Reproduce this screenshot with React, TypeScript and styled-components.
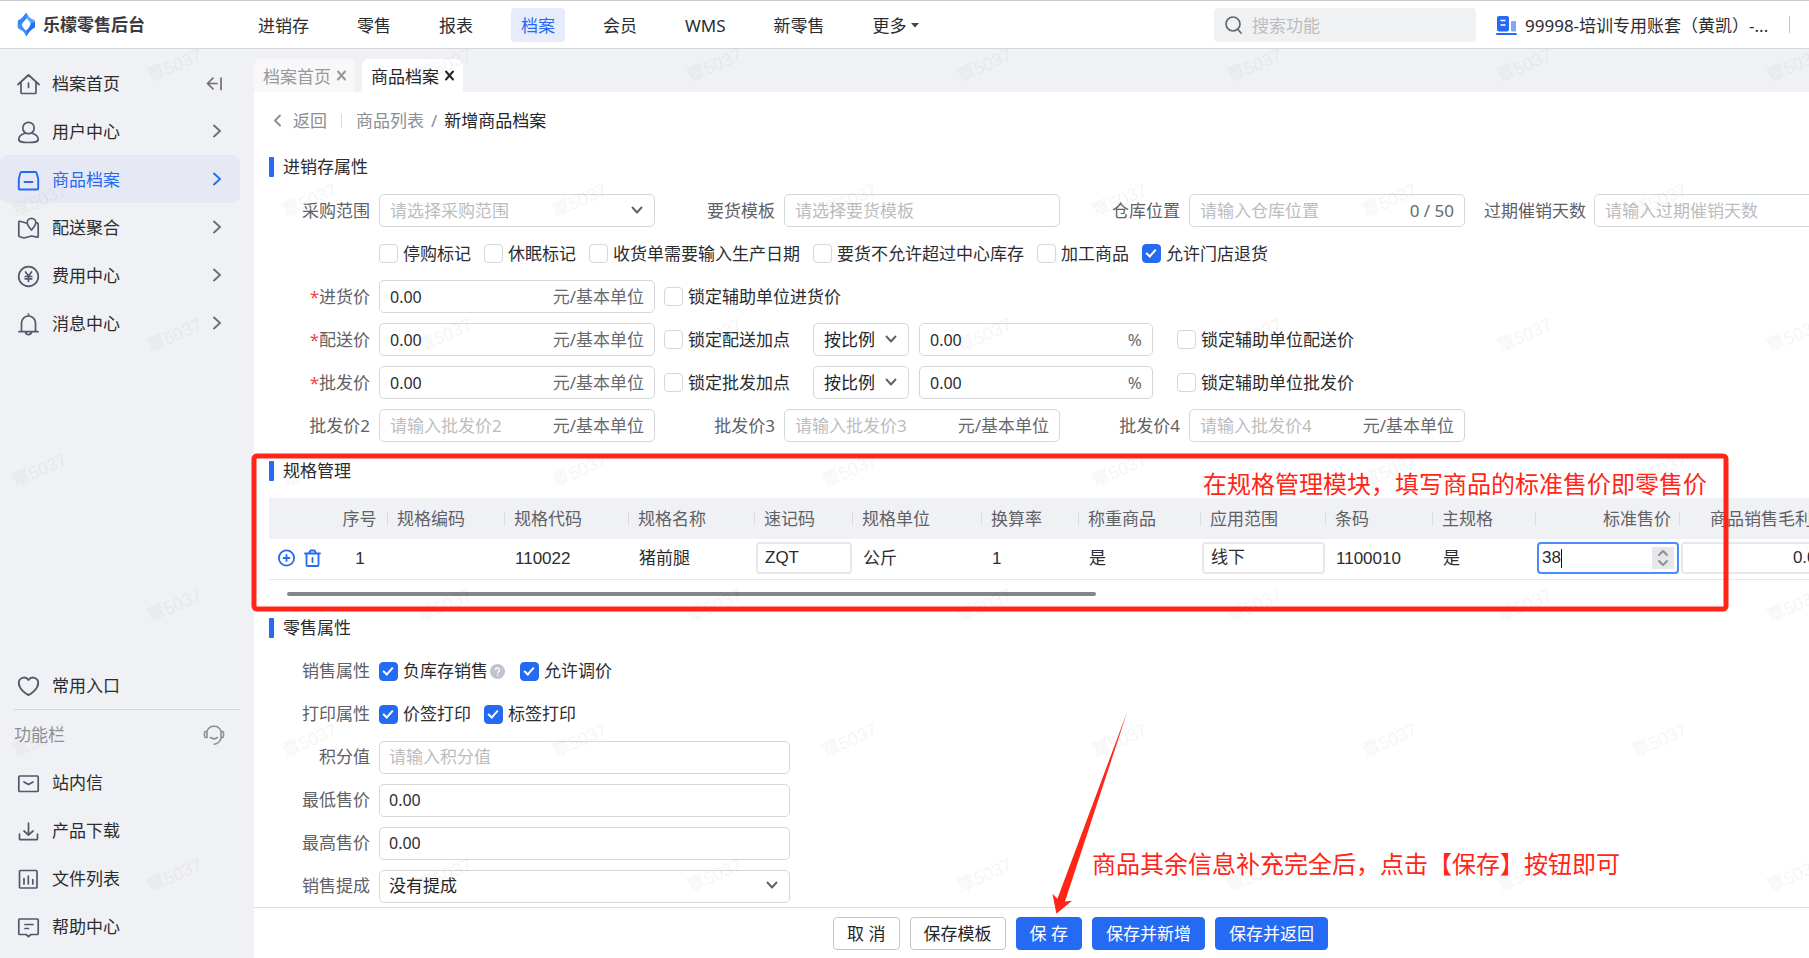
import React from 'react';
import styled, { createGlobalStyle } from 'styled-components';

const BLUE = '#256af3';
const RED = '#ff2617';
const CJK = '"Noto Sans CJK SC"';

const GlobalStyle = createGlobalStyle`
  *, *::before, *::after { box-sizing: border-box; }
  body {
    margin: 0;
    background: #fff;
    color: #2b2c2f;
    font: 17px/24px "Noto Sans", ${CJK}, sans-serif;
    overflow: hidden;
  }
  button, input, select { font: inherit; color: inherit; margin: 0; }
  a { color: inherit; text-decoration: none; }
`;

/* ---------- shell ---------- */

const Page = styled.div`
  position: relative;
  display: flex;
  flex-direction: column;
  height: 100vh;
  overflow: hidden;
`;

const Body = styled.div`
  position: relative;
  display: flex;
  flex: 1;
  min-height: 0;
`;

const Header = styled.header`
  display: flex;
  align-items: center;
  flex: none;
  height: 49px;
  border-top: 1px solid #c9cacc;
  border-bottom: 1px solid #d4d6d9;
  padding: 0 19px 0 17px;
  white-space: nowrap;
`;

const Brand = styled.a`
  display: flex;
  align-items: center;
  gap: 7px;
  width: 231px;
  font-weight: 700;
  color: #3a3b40;
`;

const Nav = styled.nav`
  display: flex;
  gap: 28px;
`;

const NavLink = styled.a<{ $active?: boolean }>`
  display: flex;
  align-items: center;
  gap: 4px;
  height: 34px;
  padding: 2px 10px 0;
  border-radius: 4px;
  color: ${(p) => (p.$active ? BLUE : '#2b2c2f')};
  background: ${(p) => (p.$active ? '#e6ecfc' : 'transparent')};
`;

const SearchBox = styled.label`
  display: flex;
  align-items: center;
  gap: 9px;
  width: 262px;
  height: 34px;
  margin-left: auto;
  padding: 0 10px;
  border-radius: 4px;
  background: #f0f1f3;
  color: #66676b;

  input {
    flex: 1;
    min-width: 0;
    border: 0;
    padding: 2px 0 0;
    outline: 0;
    background: transparent;
  }
  input::placeholder { color: #bcbdc0; }
`;

const Account = styled.button`
  display: flex;
  align-items: center;
  gap: 7px;
  width: 295px;
  margin-left: 19px;
  padding: 2px 0 0;
  border: 0;
  border-right: 1px solid #c4c5c8;
  background: none;
  height: 17px;
`;

/* ---------- sidebar ---------- */

const Sidebar = styled.aside`
  display: flex;
  flex-direction: column;
  flex: none;
  width: 254px;
  padding: 10px 14px 8px 0;
  background: #f0f1f4;
`;

const SideItem = styled.a<{ $active?: boolean }>`
  display: flex;
  align-items: center;
  gap: 12px;
  flex: none;
  height: 48px;
  padding: 2px 18px 0 17px;
  border-radius: 8px;
  color: ${(p) => (p.$active ? BLUE : '#2b2c2f')};
  background: ${(p) => (p.$active ? '#e6e9f3' : 'transparent')};

  > svg:first-child { color: ${(p) => (p.$active ? BLUE : '#55576a')}; }
  > svg:last-child { margin-left: auto; color: ${(p) => (p.$active ? BLUE : '#6d6e76')}; }
`;

const SideSpacer = styled.div`
  flex: 1;
`;

const SideCaption = styled.div`
  display: flex;
  align-items: center;
  justify-content: space-between;
  height: 49px;
  margin-left: 14px;
  padding: 2px 15px 0 0;
  border-top: 1px solid #d3d4d8;
  color: #8f9095;
`;

/* ---------- main ---------- */

const Main = styled.main`
  display: flex;
  flex-direction: column;
  flex: 1;
  min-width: 0;
`;

const Tabs = styled.div`
  display: flex;
  align-items: flex-end;
  gap: 7px;
  flex: none;
  height: 43px;
  background: #f0f1f4;
`;

const Tab = styled.button<{ $active?: boolean }>`
  display: flex;
  align-items: center;
  gap: 5px;
  height: 33px;
  width: 101px;
  padding: 2px 0 0 9px;
  border: 0;
  border-radius: 6px 6px 0 0;
  white-space: nowrap;
  background: ${(p) => (p.$active ? '#fff' : '#f8f8f9')};
  color: ${(p) => (p.$active ? '#242529' : '#97989c')};

  svg { margin-bottom: 3px; }
`;

const Content = styled.div`
  flex: 1;
  min-height: 0;
  overflow: hidden;
  padding: 17px 0 0 15px;
  white-space: nowrap;
`;

const Breadcrumb = styled.nav`
  display: flex;
  align-items: center;
  height: 24px;
  padding-left: 4px;
  color: #8d8e92;

  strong { font-weight: 400; color: #242529; }
`;

const BackLink = styled.a`
  display: flex;
  align-items: center;
  gap: 11px;
`;

const CrumbRule = styled.span`
  width: 1px;
  height: 14px;
  margin: 0 14px;
  background: #dcdde0;
`;

const Slash = styled.span`
  padding: 0 7px;
`;

const Section = styled.section<{ $top: number }>`
  margin-top: ${(p) => p.$top}px;
`;

const SectionTitle = styled.h2`
  display: flex;
  align-items: center;
  gap: 9px;
  height: 20px;
  margin: 0 0 17px;
  font-size: 17px;
  font-weight: 400;

  &::before {
    content: '';
    width: 5px;
    height: 20px;
    border-radius: 1px;
    background: ${BLUE};
  }
`;

const Rows = styled.div`
  display: flex;
  flex-direction: column;
  gap: 10px;
`;

const Row = styled.div`
  display: flex;
  align-items: center;
  height: 33px;
`;

const FieldRow = styled(Row)`
  gap: 19px;
`;

const Field = styled.div`
  display: flex;
  align-items: center;
  gap: 9px;
  flex: none;
`;

const FieldLabel = styled.label`
  flex: none;
  width: 101px;
  text-align: right;
  color: #606166;
`;

const Required = styled.span`
  color: #f04848;
`;

const Box = styled.div<{ $width: number; $pad?: number }>`
  display: flex;
  align-items: center;
  flex: none;
  width: ${(p) => p.$width}px;
  height: 33px;
  padding: 0 10px 0 ${(p) => p.$pad ?? 10}px;
  border: 1px solid #d6d7d9;
  border-radius: 5px;
  background: #fff;

  input {
    flex: 1;
    width: 0;
    min-width: 0;
    padding: 0;
    border: 0;
    outline: 0;
    background: none;
    font-size: 16px;
  }
  input::placeholder { color: #bcbdc0; font-size: 17px; }
`;

const Unit = styled.span`
  flex: none;
  color: #68696d;
`;

const SelectBox = styled(Box)<{ $muted?: boolean }>`
  color: #606166;

  select {
    flex: 1;
    width: 0;
    min-width: 0;
    padding: 0;
    border: 0;
    outline: 0;
    appearance: none;
    background: none;
    color: ${(p) => (p.$muted ? '#bcbdc0' : '#242529')};
  }
`;

const Check = styled.label`
  display: flex;
  align-items: center;
  gap: 5px;
  flex: none;

  input {
    position: relative;
    flex: none;
    appearance: none;
    width: 19px;
    height: 19px;
    border: 1px solid #d6d7d9;
    border-radius: 4px;
    background: #fff;
  }
  input:checked {
    border-color: ${BLUE};
    background: ${BLUE};
  }
  input:checked::after {
    content: '';
    position: absolute;
    left: 5px;
    top: 2px;
    width: 6px;
    height: 10px;
    border: solid #fff;
    border-width: 0 2px 2px 0;
    transform: rotate(42deg);
  }
  svg { margin: 0 2px 0 -3px; }
`;

const CheckGroup = styled.div`
  display: flex;
  gap: 13px;
`;

const PriceOptions = styled.div`
  display: flex;
  align-items: center;
  gap: 10px;
  margin-left: 9px;

  > label:first-child { margin-right: 13px; }
  > label:last-child:not(:first-child) { margin-left: 14px; }
`;

/* ---------- spec table ---------- */

const TableFrame = styled.div`
  overflow: hidden;
`;

const SpecTable = styled.table`
  width: 1569px;
  table-layout: fixed;
  border-collapse: collapse;
  font-family: "Liberation Sans", ${CJK}, sans-serif;
`;

const Th = styled.th<{ $align?: 'right' | 'center'; $plain?: boolean }>`
  height: 41px;
  padding: 2px 9px 0;
  background: linear-gradient(#dcdde0, #dcdde0) right center / 1px 14px no-repeat #f0f1f4;
  ${(p) => p.$plain && 'background: #f0f1f4;'}
  font-weight: 400;
  text-align: ${(p) => p.$align ?? 'left'};
  color: #606166;
`;

const Td = styled.td<{ $align?: 'center'; $tight?: boolean }>`
  height: 40px;
  padding: ${(p) => (p.$tight ? '0 1px 1px' : '0 9px 0 10px')};
  border-bottom: 1px solid #e8e8ea;
  text-align: ${(p) => p.$align ?? 'left'};
`;

const CellBox = styled.div<{ $focus?: boolean }>`
  position: relative;
  display: flex;
  align-items: center;
  height: 32px;
  padding: 0 ${(p) => (p.$focus ? '3px' : '9px')} 0 ${(p) => (p.$focus ? '3px' : '7px')};
  border: 2px solid ${(p) => (p.$focus ? '#4b8bfd' : '#e8e8ea')};
  border-radius: 4px;
  background: #fff;

  input {
    flex: 1;
    width: 0;
    min-width: 0;
    padding: 0;
    border: 0;
    outline: 0;
    background: none;
  }
  input[data-align='right'] { text-align: right; }
`;

const Caret = styled.span`
  position: absolute;
  left: 22px;
  top: 5px;
  width: 1px;
  height: 19px;
  background: #111;
`;

const Stepper = styled.button`
  display: grid;
  place-items: center;
  width: 22px;
  height: 22px;
  padding: 0;
  border: 0;
  background: #e7e6eb;
`;

const RowActions = styled.div`
  display: flex;
  align-items: center;
  gap: 9px;
  margin-left: -1px;
  padding-bottom: 2px;
`;

const IconButton = styled.button`
  display: flex;
  padding: 0;
  border: 0;
  background: none;
  color: ${BLUE};
`;

const ScrollThumb = styled.div`
  width: 54%;
  max-width: 809px;
  height: 4px;
  margin: 12px 0 0 18px;
  border-radius: 2px;
  background: #858585;
`;

/* ---------- footer ---------- */

const Footer = styled.footer`
  display: flex;
  justify-content: center;
  align-items: center;
  gap: 10px;
  flex: none;
  height: 51px;
  padding: 1px 0 0 98px;
  border-top: 1px solid #dcdde0;
`;

const Button = styled.button<{ $primary?: boolean }>`
  height: 33px;
  padding: 1px 13px 0;
  border: 1px solid ${(p) => (p.$primary ? BLUE : '#c4c5c8')};
  border-radius: 4px;
  background: ${(p) => (p.$primary ? BLUE : '#fff')};
  color: ${(p) => (p.$primary ? '#fff' : '#242529')};
  line-height: 24px;
`;

/* ---------- overlays ---------- */

const Overlay = styled.svg`
  position: absolute;
  inset: 0;
  width: 100%;
  height: 100%;
  pointer-events: none;
`;

const Note = styled.p<{ $x: number; $y: number }>`
  position: absolute;
  left: ${(p) => p.$x}px;
  top: ${(p) => p.$y}px;
  margin: 0;
  font: 24px/32px ${CJK}, sans-serif;
  color: ${RED};
  white-space: nowrap;
`;

/* ---------- icons ---------- */

const Line: React.FC<{ w?: number; h?: number; sw?: number; children: React.ReactNode }> = ({
  w = 23,
  h = 24,
  sw = 1.7,
  children,
}) => (
  <svg width={w} height={h} viewBox={`0 0 ${w} ${h}`} fill="none" stroke="currentColor" strokeWidth={sw} strokeLinecap="round" strokeLinejoin="round" aria-hidden="true">
    {children}
  </svg>
);

const ChevronRight = () => (
  <Line w={10} h={16} sw={1.9}><path d="M2 1.500l6 5.500-6 5.500" /></Line>
);
const ChevronDown = () => (
  <Line w={14} h={12} sw={1.9}><path d="M2.500 2.500L7 7.500l4.500-5" /></Line>
);
const Close = () => (
  <Line w={11} h={11} sw={2}><path d="M2 1.500l7 8M9 1.500l-7 8" /></Line>
);

const icons = {
  home: <Line><path d="M1 12.500L11.500 3 22 12.500M4 10.500V20.500q0 1 1 1h13q1 0 1-1V10.500M11.500 11v4.500" /></Line>,
  user: <Line><circle cx="11.500" cy="8" r="5.700" /><path d="M7.800 13.200C4 14.500 1.800 16.800 1.800 19.200c0 2.800 3 3.300 9.700 3.300s9.700-.5 9.700-3.300c0-2.400-2.200-4.700-6-6" /></Line>,
  goods: <Line sw={1.9}><path d="M4.800 4h13.400q1.300 0 1.600 1.500L21.200 11v9.500q0 1-1 1H2.800q-1 0-1-1V11L3.200 5.500Q3.500 4 4.800 4zM7.500 14h8" /></Line>,
  map: <Line><path d="M9 7L3 5.300Q1.800 5 1.800 6.300V19.500q0 1 1 1.300L7 22l7.500-2 5.500 1.200q1.200.2 1.200-1V8q0-1.200-1.700-1.500M14.500 14C12 11 10.200 9 10.200 6.700a4.300 4.300 0 0 1 8.600 0C18.800 9 17 11 14.500 14z" /></Line>,
  yen: <Line><circle cx="11.500" cy="12.500" r="9.800" /><path d="M8.500 8l3 4 3-4M8.200 12.500h6.600M8.200 14.800h6.600M11.500 12v5.500" /></Line>,
  bell: <Line><path d="M4.500 19.500V11a7 7 0 0 1 14 0v8.500M2 19.700h19M11.500 2v2M8.500 20.200c.8 3.200 5.200 3.200 6 0" /></Line>,
  heart: <Line sw={1.9}><path d="M11.500 21C9 20 1.800 15 1.800 9a5.300 5.300 0 0 1 9.700-3A5.300 5.300 0 0 1 21.200 9c0 6-7.200 11-9.700 12z" /></Line>,
  mail: <Line><rect x="1.800" y="5" width="19.400" height="15.500" rx="1" /><path d="M7 11l4.500 2.500L16 11" /></Line>,
  download: <Line><path d="M11.500 4v11.500M7 12l4.500 4 4.500-4M2.500 15v4.700q0 1 1 1h16q1 0 1-1V15" /></Line>,
  chart: <Line><rect x="2.500" y="3.500" width="17.500" height="17.500" rx="1" /><path d="M7 11.500V17M11.300 9v8M15.800 12.500V17" /></Line>,
  help: <Line><path d="M2.500 4h18q.7 0 .7.7v14.100q0 .7-.7.7H14l-2.500 2L9 19.500H2.500q-.7 0-.7-.7V4.700q0-.7.7-.7zM8 9.500h8M8 13.500h3.500" /></Line>,
  collapse: <Line w={16} h={16}><path d="M1.500 7.500H11M7 2L1.500 7.500 7 13M15 2v11.500" /></Line>,
  headset: <Line w={22} h={22} sw={1.6}><path d="M4 7.500a7.300 7.300 0 0 1 14 0M18.300 13c-.5 4-3 6.500-7 7.300M7.500 13.500c2 1.500 5 1.500 7 0M4 7.500H2.500Q1.500 7.500 1.500 9v3q0 1.500 1 1.500H4zM18 7.500h1.500q1 0 1 1.500v3q0 1.500-1 1.500H18z" /></Line>,
};

const Logo = () => (
  <svg width="19" height="25" viewBox="0 0 19 25" aria-hidden="true">
    <path fill="#2f86f5" d="M9 .5l2.200 4.200C9 7 6.500 9.500 4.500 12.500L5 17 .8 14V8.500C4 7.500 7 4 9 .5z" />
    <path fill="#58a4fa" d="M10 1.500l2.500 4 5.500 3V13l-4-.5C13 9.500 11 7.500 9 6z" />
    <path fill="#2470ee" d="M18 10v5.500c-3.500 1.500-6.500 5-8.500 9L7.500 20c3.500-2.500 5.500-5.500 6.500-9z" />
    <path fill="#3c90f7" d="M.8 11v5l5.500 3.500 3 4.500 1-4.500C7.500 17.500 5.500 15 4.500 12z" />
  </svg>
);

const Building = () => (
  <svg width="23" height="20" viewBox="0 0 23 20" aria-hidden="true">
    <rect x="2" y="0" width="12" height="15.500" rx="2" fill={BLUE} />
    <path d="M5.500 4.500h5M5.500 9h5" stroke="#fff" strokeWidth="1.500" />
    <rect x="16" y="5" width="5" height="10.500" rx="1" fill="#7ea8f8" />
    <rect x="1" y="17" width="21" height="2" rx="1" fill={BLUE} />
  </svg>
);

const Question = () => (
  <svg width="15" height="15" viewBox="0 0 15 15" aria-hidden="true">
    <circle cx="7.500" cy="7.500" r="7.500" fill="#bfc3cd" />
    <path d="M5.500 6a2 2 0 1 1 2.800 1.800q-.8.400-.8 1.400M7.500 10.600v1.200" fill="none" stroke="#fff" strokeWidth="1.300" />
  </svg>
);

/* ---------- data ---------- */

const topNav = ['进销存', '零售', '报表', '档案', '会员', 'WMS', '新零售'];

const sideTop: [keyof typeof icons, string][] = [
  ['user', '用户中心'],
  ['goods', '商品档案'],
  ['map', '配送聚合'],
  ['yen', '费用中心'],
  ['bell', '消息中心'],
];

const sideTools: [keyof typeof icons, string][] = [
  ['mail', '站内信'],
  ['download', '产品下载'],
  ['chart', '文件列表'],
  ['help', '帮助中心'],
];

const flags = ['停购标记', '休眠标记', '收货单需要输入生产日期', '要货不允许超过中心库存', '加工商品', '允许门店退货'];

const columns: { name: string; width: number; align?: 'right' | 'center'; plain?: boolean }[] = [
  { name: '', width: 62, plain: true },
  { name: '序号', width: 57, align: 'center' },
  { name: '规格编码', width: 117 },
  { name: '规格代码', width: 124 },
  { name: '规格名称', width: 126 },
  { name: '速记码', width: 98 },
  { name: '规格单位', width: 129 },
  { name: '换算率', width: 97 },
  { name: '称重商品', width: 122 },
  { name: '应用范围', width: 125 },
  { name: '条码', width: 107 },
  { name: '主规格', width: 103 },
  { name: '标准售价', width: 144, align: 'right' },
  { name: '商品销售毛利率', width: 158, align: 'right' },
];

/* ---------- form parts ---------- */

const TextField: React.FC<{
  id: string;
  label: string;
  width?: number;
  pad?: number;
  required?: boolean;
  value?: string;
  placeholder?: string;
  unit?: string;
}> = ({ id, label, width = 276, pad, required, value, placeholder, unit }) => (
  <Field>
    <FieldLabel htmlFor={id}>
      {required && <Required>*</Required>}
      {label}
    </FieldLabel>
    <Box $width={width} $pad={pad}>
      <input id={id} defaultValue={value} placeholder={placeholder} />
      {unit && <Unit>{unit}</Unit>}
    </Box>
  </Field>
);

const CheckBox: React.FC<{ label: string; checked?: boolean; children?: React.ReactNode }> = ({ label, checked, children }) => (
  <Check>
    <input type="checkbox" defaultChecked={checked} />
    <span>{label}</span>
    {children}
  </Check>
);

const PriceRow: React.FC<{ id: string; label: string; markup: string; lock: string }> = ({ id, label, markup, lock }) => (
  <Row>
    <TextField id={id} label={label} required value="0.00" unit="元/基本单位" />
    <PriceOptions>
      <CheckBox label={markup} />
      <SelectBox $width={96}>
        <select aria-label={`${label}加点方式`} defaultValue="按比例">
          <option>按比例</option>
        </select>
        <ChevronDown />
      </SelectBox>
      <Box $width={234}>
        <input aria-label={`${label}加点`} defaultValue="0.00" />
        <Unit>%</Unit>
      </Box>
      <CheckBox label={lock} />
    </PriceOptions>
  </Row>
);

const Watermark = () => (
  <Overlay aria-hidden="true">
    <defs>
      <pattern id="mark" width="270" height="270" patternUnits="userSpaceOnUse">
        <g fill="#000" fillOpacity="0.04" fontSize="18" fontFamily={`"Liberation Sans", ${CJK}, sans-serif`} textAnchor="middle">
          <text transform="translate(42 157) rotate(-24)">覃5037</text>
          <text transform="translate(177 22) rotate(-24)">覃5037</text>
          <text transform="translate(177 292) rotate(-24)">覃5037</text>
        </g>
      </pattern>
    </defs>
    <rect width="100%" height="100%" fill="url(#mark)" />
  </Overlay>
);

export default function App() {
  return (
    <Page>
      <GlobalStyle />
      <Header>
        <Brand href="#">
          <Logo />
          乐檬零售后台
        </Brand>
        <Nav>
          {topNav.map((name) => (
            <NavLink key={name} href="#" $active={name === '档案'}>{name}</NavLink>
          ))}
          <NavLink href="#">
            更多
            <svg width="8" height="5" viewBox="0 0 8 5" aria-hidden="true"><path d="M0 0h8L4 4.500z" fill="#444" /></svg>
          </NavLink>
        </Nav>
        <SearchBox>
          <Line w={19} h={20} sw={1.7}><circle cx="9" cy="9" r="7" /><path d="M14 14.500l3 3.500" /></Line>
          <input placeholder="搜索功能" aria-label="搜索功能" />
        </SearchBox>
        <Account>
          <Building />
          99998-培训专用账套（黄凯）-...
        </Account>
      </Header>

      <Body>
        <Sidebar>
          <SideItem href="#">
            {icons.home}
            档案首页
            {icons.collapse}
          </SideItem>
          {sideTop.map(([icon, name]) => (
            <SideItem key={name} href="#" $active={name === '商品档案'}>
              {icons[icon]}
              {name}
              <ChevronRight />
            </SideItem>
          ))}
          <SideSpacer />
          <SideItem href="#">
            {icons.heart}
            <span>常用入口</span>
          </SideItem>
          <SideCaption>
            功能栏
            {icons.headset}
          </SideCaption>
          {sideTools.map(([icon, name]) => (
            <SideItem key={name} href="#">
              {icons[icon]}
              <span>{name}</span>
            </SideItem>
          ))}
        </Sidebar>

        <Main>
          <Tabs>
            <Tab>档案首页<Close /></Tab>
            <Tab $active>商品档案<Close /></Tab>
          </Tabs>

          <Content>
            <Breadcrumb>
              <BackLink href="#">
                <Line w={9} h={14} sw={1.9}><path d="M7 1.500L2 6.500l5 5" /></Line>
                返回
              </BackLink>
              <CrumbRule />
              <a href="#">商品列表</a>
              <Slash>/</Slash>
              <strong>新增商品档案</strong>
            </Breadcrumb>

            <Section $top={24}>
              <SectionTitle>进销存属性</SectionTitle>
              <Rows>
                <FieldRow>
                  <Field>
                    <FieldLabel htmlFor="scope">采购范围</FieldLabel>
                    <SelectBox $width={276} $muted>
                      <select id="scope" defaultValue="请选择采购范围">
                        <option>请选择采购范围</option>
                      </select>
                      <ChevronDown />
                    </SelectBox>
                  </Field>
                  <TextField id="template" label="要货模板" placeholder="请选择要货模板" />
                  <TextField id="location" label="仓库位置" placeholder="请输入仓库位置" unit="0 / 50" />
                  <TextField id="expiry" label="过期催销天数" placeholder="请输入过期催销天数" />
                </FieldRow>
                <Row>
                  <Field>
                    <FieldLabel as="span" />
                    <CheckGroup>
                      {flags.map((name) => (
                        <CheckBox key={name} label={name} checked={name === '允许门店退货'} />
                      ))}
                    </CheckGroup>
                  </Field>
                </Row>
                <Row>
                  <TextField id="purchase" label="进货价" required value="0.00" unit="元/基本单位" />
                  <PriceOptions>
                    <CheckBox label="锁定辅助单位进货价" />
                  </PriceOptions>
                </Row>
                <PriceRow id="delivery" label="配送价" markup="锁定配送加点" lock="锁定辅助单位配送价" />
                <PriceRow id="wholesale" label="批发价" markup="锁定批发加点" lock="锁定辅助单位批发价" />
                <FieldRow>
                  {[2, 3, 4].map((n) => (
                    <TextField key={n} id={`wholesale${n}`} label={`批发价${n}`} placeholder={`请输入批发价${n}`} unit="元/基本单位" />
                  ))}
                </FieldRow>
              </Rows>
            </Section>

            <Section $top={19}>
              <SectionTitle>规格管理</SectionTitle>
              <TableFrame>
                <SpecTable>
                  <colgroup>
                    {columns.map((c) => <col key={c.name} style={{ width: c.width }} />)}
                  </colgroup>
                  <thead>
                    <tr>
                      {columns.map((c) => (
                        <Th key={c.name} $align={c.align} $plain={c.plain}>{c.name}</Th>
                      ))}
                    </tr>
                  </thead>
                  <tbody>
                    <tr>
                      <Td>
                        <RowActions>
                          <IconButton aria-label="新增规格">
                            <Line w={17} h={18} sw={1.8}><circle cx="8.500" cy="9" r="7.600" /><path d="M5.500 9h6M8.500 6v6" /></Line>
                          </IconButton>
                          <IconButton aria-label="删除规格">
                            <Line w={17} h={18} sw={1.8}><path d="M1 4.500h15M2.500 4.500V16q0 1 1 1h10q1 0 1-1V4.500M5 4l1.500-2.500h4L12 4M8.500 9v4" /></Line>
                          </IconButton>
                        </RowActions>
                      </Td>
                      <Td $align="center">1</Td>
                      <Td />
                      <Td>110022</Td>
                      <Td>猪前腿</Td>
                      <Td $tight><CellBox><input aria-label="速记码" defaultValue="ZQT" /></CellBox></Td>
                      <Td>公斤</Td>
                      <Td>1</Td>
                      <Td>是</Td>
                      <Td $tight><CellBox><input aria-label="应用范围" defaultValue="线下" /></CellBox></Td>
                      <Td>1100010</Td>
                      <Td>是</Td>
                      <Td $tight>
                        <CellBox $focus>
                          <input aria-label="标准售价" defaultValue="38" />
                          <Caret />
                          <Stepper aria-label="调整售价">
                            <Line w={12} h={18} sw={1.8}><path d="M2 6l4-4 4 4M2 12l4 4 4-4" stroke="#8b8b96" /></Line>
                          </Stepper>
                        </CellBox>
                      </Td>
                      <Td $tight><CellBox><input aria-label="商品销售毛利率" data-align="right" defaultValue="0.00" /></CellBox></Td>
                    </tr>
                  </tbody>
                </SpecTable>
              </TableFrame>
              <ScrollThumb />
            </Section>

            <Section $top={22}>
              <SectionTitle>零售属性</SectionTitle>
              <Rows>
                <Row>
                  <Field>
                    <FieldLabel as="span">销售属性</FieldLabel>
                    <CheckGroup>
                      <CheckBox label="负库存销售" checked><Question /></CheckBox>
                      <CheckBox label="允许调价" checked />
                    </CheckGroup>
                  </Field>
                </Row>
                <Row>
                  <Field>
                    <FieldLabel as="span">打印属性</FieldLabel>
                    <CheckGroup>
                      <CheckBox label="价签打印" checked />
                      <CheckBox label="标签打印" checked />
                    </CheckGroup>
                  </Field>
                </Row>
                <Row><TextField id="points" label="积分值" width={411} pad={9} placeholder="请输入积分值" /></Row>
                <Row><TextField id="min" label="最低售价" width={411} pad={9} value="0.00" /></Row>
                <Row><TextField id="max" label="最高售价" width={411} pad={9} value="0.00" /></Row>
                <Row>
                  <Field>
                    <FieldLabel htmlFor="commission">销售提成</FieldLabel>
                    <SelectBox $width={411} $pad={9}>
                      <select id="commission" defaultValue="没有提成">
                        <option>没有提成</option>
                      </select>
                      <ChevronDown />
                    </SelectBox>
                  </Field>
                </Row>
              </Rows>
            </Section>
          </Content>

          <Footer>
            <Button>取 消</Button>
            <Button>保存模板</Button>
            <Button $primary>保 存</Button>
            <Button $primary>保存并新增</Button>
            <Button $primary>保存并返回</Button>
          </Footer>
        </Main>
        <Watermark />
      </Body>

      <Overlay aria-hidden="true">
        <rect x="254" y="456" width="1472" height="153" rx="3" fill="none" stroke={RED} strokeWidth="5" />
        <path fill={RED} d="M1127.500 711L1065 901.500l7-.700-15.600 13-4-20 5 5z" />
      </Overlay>
      <Note $x={1203} $y={467}>在规格管理模块，填写商品的标准售价即零售价</Note>
      <Note $x={1092} $y={847}>商品其余信息补充完全后，点击【保存】按钮即可</Note>
    </Page>
  );
}
